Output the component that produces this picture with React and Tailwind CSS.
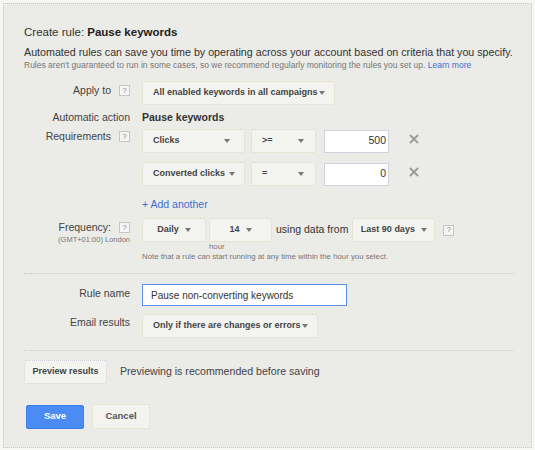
import React from "react";

const font = { fontFamily: '"Liberation Sans", Arial, sans-serif' };

function Arrow() {
  return (
    <svg width="6" height="4" viewBox="0 0 6 4" className="shrink-0">
      <path d="M0 0 L6 0 L3 4 Z" fill="#777" />
    </svg>
  );
}

function Help() {
  return (
    <span className="inline-flex items-center justify-center w-[11px] h-[11px] border border-[#c6c6c6] bg-[#f5f5f3] text-[7.5px] leading-none text-[#888] ml-[8px]">
      ?
    </span>
  );
}

function Select({ children, className = "" }) {
  return (
    <div
      className={
        "h-[24px] flex items-center whitespace-nowrap bg-[#f3f3f0] border border-dotted border-[#d9d3bb] rounded-[2px] text-[9px] font-bold text-[#444] " +
        className
      }
    >
      {children}
    </div>
  );
}

function XIcon() {
  return (
    <svg width="10" height="10" viewBox="0 0 10 10">
      <path d="M1 1 L9 9 M9 1 L1 9" stroke="#9a9a9a" strokeWidth="1.8" />
    </svg>
  );
}

function Row({ label, help, labelClass = "pt-[1px]", children, className = "" }) {
  return (
    <div className={"flex " + className}>
      <div className={"w-[106px] shrink-0 flex justify-end items-start text-[10.5px] leading-[13px] text-[#444] " + labelClass}>
        <span>{label}</span>
        {help && <span className="mt-[1px] flex"><Help /></span>}
      </div>
      <div className="ml-[12px]">{children}</div>
    </div>
  );
}

export default function App() {
  return (
    <div className="w-[535px] h-[450px] bg-[#f6f6f3] pt-[3px] pl-[3px]" style={font}>
      <div className="w-[529px] h-[445px] bg-[#ebebe8] border border-dotted border-[#c9c3cd] pt-[21px] pl-[20px] pr-[17px] text-[#333]">
        <div className="text-[11.5px] leading-[14px] text-[#333]">
          Create rule: <span className="font-bold text-[#222]">Pause keywords</span>
        </div>
        <div className="mt-[7px] text-[10.7px] leading-[13px] text-[#333] whitespace-nowrap">
          Automated rules can save you time by operating across your account based on criteria that you specify.
        </div>
        <div className="mt-[1px] text-[8.5px] leading-[11px] text-[#777] whitespace-nowrap">
          Rules aren't guaranteed to run in some cases, so we recommend regularly monitoring the rules you set up.{" "}
          <span className="text-[#3b6fd1]">Learn more</span>
        </div>

        <Row label="Apply to" help className="mt-[10px]" labelClass="pt-[3px]">
          <Select className="w-[193px] pl-[10px] pr-[9px] justify-between">
            <span>All enabled keywords in all campaigns</span>
            <Arrow />
          </Select>
        </Row>

        <Row label="Automatic action" className="mt-[6px]" labelClass="">
          <div className="text-[10.5px] leading-[13px] font-bold text-[#333]">Pause keywords</div>
        </Row>

        <Row label="Requirements" help className="mt-[5px]" labelClass="pt-[1px]">
          <div className="flex items-center">
            <Select className="w-[103px] pl-[10px] pr-[14px] justify-between">
              <span>Clicks</span>
              <Arrow />
            </Select>
            <Select className="w-[65px] ml-[6px] pl-[10px] pr-[11px] justify-between">
              <span>&gt;=</span>
              <Arrow />
            </Select>
            <div className="w-[65px] h-[23px] ml-[8px] bg-white border border-[#d6cfe0] flex items-center justify-end pr-[2px] text-[10.5px] text-[#333]">
              500
            </div>
            <div className="ml-[20px] -mt-[4px] flex">
              <XIcon />
            </div>
          </div>
          <div className="flex items-center mt-[9px]">
            <Select className="w-[103px] pl-[10px] pr-[9px] justify-between">
              <span>Converted clicks</span>
              <Arrow />
            </Select>
            <Select className="w-[65px] ml-[6px] pl-[10px] pr-[11px] justify-between">
              <span>=</span>
              <Arrow />
            </Select>
            <div className="w-[65px] h-[23px] ml-[8px] bg-white border border-[#d6cfe0] flex items-center justify-end pr-[2px] text-[10.5px] text-[#333]">
              0
            </div>
            <div className="ml-[20px] -mt-[4px] flex">
              <XIcon />
            </div>
          </div>
          <div className="mt-[12px] text-[10.5px] leading-[13px] text-[#3b6fd1]">+ Add another</div>
        </Row>

        <div className="flex mt-[7px]">
          <div className="w-[106px] shrink-0 flex flex-col items-end pt-[3px]">
            <div className="flex items-start text-[10.5px] leading-[13px] text-[#444]">
              <span>Frequency:</span>
              <span className="mt-[1px] flex"><Help /></span>
            </div>
            <div className="text-[7.5px] leading-[10px] text-[#777] mt-[1px] whitespace-nowrap">(GMT+01:00) London</div>
          </div>
          <div className="ml-[12px]">
            <div className="flex items-center">
              <Select className="w-[64px] h-[23px] justify-center gap-[6px]">
                <span>Daily</span>
                <Arrow />
              </Select>
              <Select className="w-[63px] h-[23px] ml-[3px] justify-center gap-[6px]">
                <span>14</span>
                <Arrow />
              </Select>
              <span className="ml-[4px] text-[10.5px] text-[#333] whitespace-nowrap">using data from</span>
              <Select className="w-[83px] h-[23px] ml-[4px] justify-center gap-[6px]">
                <span>Last 90 days</span>
                <Arrow />
              </Select>
              <Help />
            </div>
            <div className="pl-[67px] text-[7.8px] leading-[10px] text-[#777]">hour</div>
            <div className="text-[7.8px] leading-[10px] text-[#777] whitespace-nowrap">
              Note that a rule can start running at any time within the hour you select.
            </div>
          </div>
        </div>

        <div className="mt-[11px] border-t border-dotted border-[#cdbfda]" />

        <Row label="Rule name" className="mt-[10px]" labelClass="pt-[3px]">
          <div className="w-[205px] h-[22px] bg-white border border-[#5b8ff0] flex items-center pl-[8px] text-[10px] text-[#333] whitespace-nowrap">
            Pause non-converting keywords
          </div>
        </Row>

        <Row label="Email results" className="mt-[8px]" labelClass="pt-[2px]">
          <Select className="w-[176px] pl-[10px] pr-[9px] justify-between">
            <span>Only if there are changes or errors</span>
            <Arrow />
          </Select>
        </Row>

        <div className="mt-[12px] border-t border-dotted border-[#dccf9f]" />

        <div className="mt-[9px] flex items-center">
          <div className="w-[83px] h-[24px] flex items-center justify-center bg-[#f3f3f0] border border-dotted border-[#d6c9dc] rounded-[2px] text-[9px] font-bold text-[#444] whitespace-nowrap">
            Preview results
          </div>
          <span className="ml-[13px] text-[10.6px] text-[#444] whitespace-nowrap">Previewing is recommended before saving</span>
        </div>

        <div className="mt-[20px] flex items-center pl-[2px]">
          <div className="w-[58px] h-[24px] flex items-center justify-center bg-[#4b8bf4] border border-[#3f7de8] rounded-[2px] text-[9.5px] font-bold text-white">
            Save
          </div>
          <div className="w-[58px] h-[25px] ml-[8px] flex items-center justify-center bg-[#f3f3f0] border border-dotted border-[#dcd6bc] rounded-[2px] text-[9.5px] font-bold text-[#555]">
            Cancel
          </div>
        </div>
      </div>
    </div>
  );
}
